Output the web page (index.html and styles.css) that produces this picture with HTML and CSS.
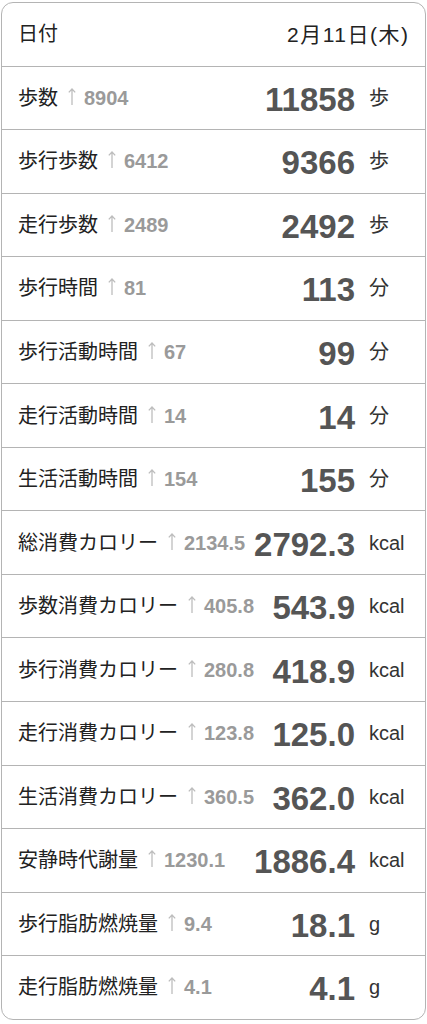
FILE: index.html
```html
<!DOCTYPE html>
<html lang="ja">

<head>
    <meta charset="UTF-8" />
    <meta name="viewport" content="width=device-width, initial-scale=1.0" />
    <title>活動量</title>
    <link rel="stylesheet" href="styles.css">
</head>

<body>
    <div class="table">
        <div class="row head">
            <div class="label">日付</div>
            <div class="date">2月11日(木)</div>
        </div>

        <div class="row">
            <div class="label">歩数<span class="prev"><svg class="arrow" viewBox="0 0 8 17"><path d="M4 17V1.2M0.8 4.4L4 1L7.2 4.4" /></svg>8904</span></div>
            <div class="value">11858</div>
            <div class="unit">歩</div>
        </div>
        <div class="row">
            <div class="label">歩行歩数<span class="prev"><svg class="arrow" viewBox="0 0 8 17"><path d="M4 17V1.2M0.8 4.4L4 1L7.2 4.4" /></svg>6412</span></div>
            <div class="value">9366</div>
            <div class="unit">歩</div>
        </div>
        <div class="row">
            <div class="label">走行歩数<span class="prev"><svg class="arrow" viewBox="0 0 8 17"><path d="M4 17V1.2M0.8 4.4L4 1L7.2 4.4" /></svg>2489</span></div>
            <div class="value">2492</div>
            <div class="unit">歩</div>
        </div>
        <div class="row">
            <div class="label">歩行時間<span class="prev"><svg class="arrow" viewBox="0 0 8 17"><path d="M4 17V1.2M0.8 4.4L4 1L7.2 4.4" /></svg>81</span></div>
            <div class="value">113</div>
            <div class="unit">分</div>
        </div>
        <div class="row">
            <div class="label">歩行活動時間<span class="prev"><svg class="arrow" viewBox="0 0 8 17"><path d="M4 17V1.2M0.8 4.4L4 1L7.2 4.4" /></svg>67</span></div>
            <div class="value">99</div>
            <div class="unit">分</div>
        </div>
        <div class="row">
            <div class="label">走行活動時間<span class="prev"><svg class="arrow" viewBox="0 0 8 17"><path d="M4 17V1.2M0.8 4.4L4 1L7.2 4.4" /></svg>14</span></div>
            <div class="value">14</div>
            <div class="unit">分</div>
        </div>
        <div class="row">
            <div class="label">生活活動時間<span class="prev"><svg class="arrow" viewBox="0 0 8 17"><path d="M4 17V1.2M0.8 4.4L4 1L7.2 4.4" /></svg>154</span></div>
            <div class="value">155</div>
            <div class="unit">分</div>
        </div>
        <div class="row">
            <div class="label">総消費カロリー<span class="prev"><svg class="arrow" viewBox="0 0 8 17"><path d="M4 17V1.2M0.8 4.4L4 1L7.2 4.4" /></svg>2134.5</span></div>
            <div class="value">2792.3</div>
            <div class="unit">kcal</div>
        </div>
        <div class="row">
            <div class="label">歩数消費カロリー<span class="prev"><svg class="arrow" viewBox="0 0 8 17"><path d="M4 17V1.2M0.8 4.4L4 1L7.2 4.4" /></svg>405.8</span></div>
            <div class="value">543.9</div>
            <div class="unit">kcal</div>
        </div>
        <div class="row">
            <div class="label">歩行消費カロリー<span class="prev"><svg class="arrow" viewBox="0 0 8 17"><path d="M4 17V1.2M0.8 4.4L4 1L7.2 4.4" /></svg>280.8</span></div>
            <div class="value">418.9</div>
            <div class="unit">kcal</div>
        </div>
        <div class="row">
            <div class="label">走行消費カロリー<span class="prev"><svg class="arrow" viewBox="0 0 8 17"><path d="M4 17V1.2M0.8 4.4L4 1L7.2 4.4" /></svg>123.8</span></div>
            <div class="value">125.0</div>
            <div class="unit">kcal</div>
        </div>
        <div class="row">
            <div class="label">生活消費カロリー<span class="prev"><svg class="arrow" viewBox="0 0 8 17"><path d="M4 17V1.2M0.8 4.4L4 1L7.2 4.4" /></svg>360.5</span></div>
            <div class="value">362.0</div>
            <div class="unit">kcal</div>
        </div>
        <div class="row">
            <div class="label">安静時代謝量<span class="prev"><svg class="arrow" viewBox="0 0 8 17"><path d="M4 17V1.2M0.8 4.4L4 1L7.2 4.4" /></svg>1230.1</span></div>
            <div class="value">1886.4</div>
            <div class="unit">kcal</div>
        </div>
        <div class="row">
            <div class="label">歩行脂肪燃焼量<span class="prev"><svg class="arrow" viewBox="0 0 8 17"><path d="M4 17V1.2M0.8 4.4L4 1L7.2 4.4" /></svg>9.4</span></div>
            <div class="value">18.1</div>
            <div class="unit">g</div>
        </div>
        <div class="row">
            <div class="label">走行脂肪燃焼量<span class="prev"><svg class="arrow" viewBox="0 0 8 17"><path d="M4 17V1.2M0.8 4.4L4 1L7.2 4.4" /></svg>4.1</span></div>
            <div class="value">4.1</div>
            <div class="unit">g</div>
        </div>
    </div>
</body>

</html>
```

FILE: styles.css
```css
body {
    margin: 0;
    background-color: #fff;
    font-family: "Liberation Sans", "Noto Sans CJK JP", sans-serif;
    color: #222;
}

.table {
    width: 425px;
    box-sizing: border-box;
    margin: 2px 0 0 1px;
    border: 1px solid #b4b4b4;
    border-radius: 12px;
    overflow: hidden;
}

.row {
    height: 62.56px;
    display: grid;
    grid-template-columns: 1fr auto 56px;
    align-items: center;
    padding-left: 16px;
}

.row + .row {
    border-top: 1px solid #b4b4b4;
}

.head {
    grid-template-columns: 1fr auto;
    padding-right: 15.5px;
}

.label,
.date,
.unit {
    font-size: 20px;
    line-height: 1;
    white-space: nowrap;
}

.date {
    font-size: 21px;
    letter-spacing: 1.5px;
}

.label {
    display: flex;
    align-items: center;
}

.prev {
    display: inline-flex;
    align-items: flex-end;
    margin-left: 9.5px;
    font-size: 20px;
    font-weight: bold;
    color: #9a9a9a;
}

.arrow {
    width: 8px;
    height: 17px;
    margin-right: 8.5px;
    margin-bottom: 3px;
    fill: none;
    stroke: #bdbdbd;
    stroke-width: 1.3;
}

.value {
    font-size: 33px;
    font-weight: bold;
    line-height: 1;
    color: #555;
    text-align: right;
    margin-right: 14px;
    margin-top: 3px;
}

.unit {
    color: #333;
}
```
